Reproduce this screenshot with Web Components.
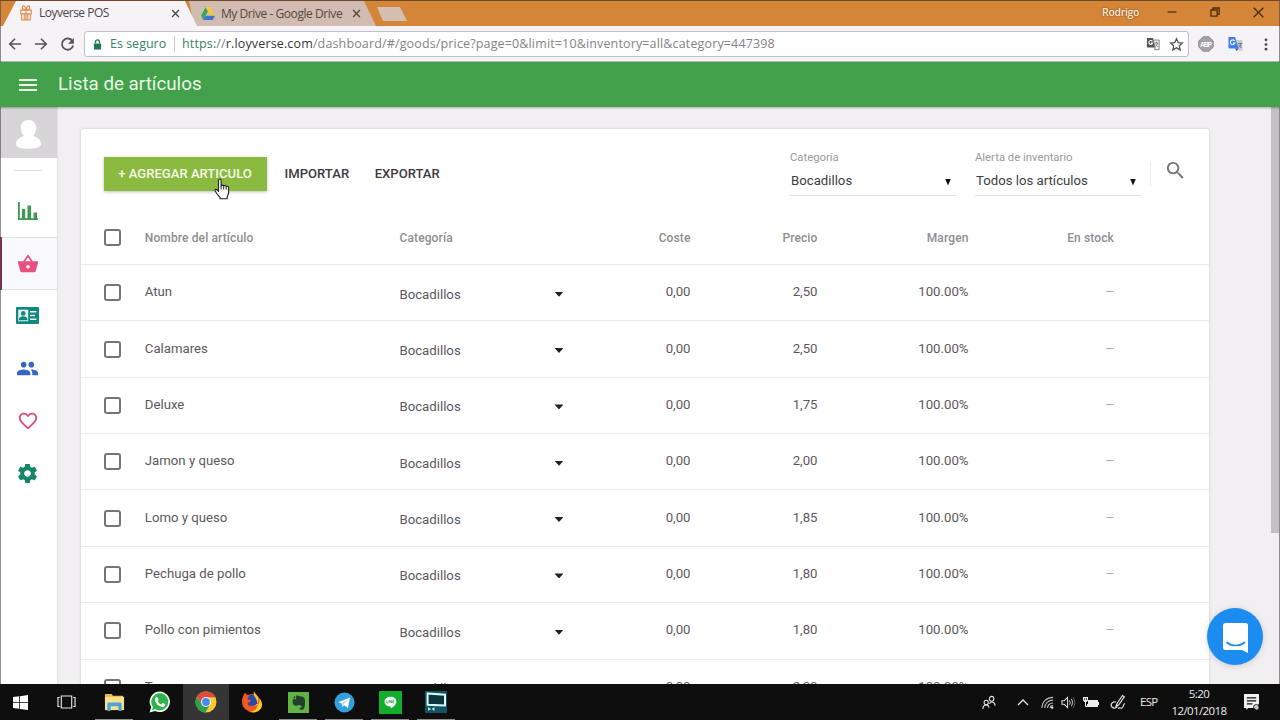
<!DOCTYPE html>
<html lang="es">
<head>
<meta charset="utf-8">
<title>Loyverse POS</title>
<style>
    html, body { margin: 0; height: 100%; overflow: hidden; }
    body { font-family: Roboto, "Liberation Sans", sans-serif; }
</style>
</head>
<body>
<pos-desktop></pos-desktop>

<script>
const ICONS = {
    gift: ["0 0 16 16", `<g fill="none" stroke="#df8a45" stroke-width="1.2"><path d="M2 5.2h12v3.6H2zM3 9v6h10V9M8 5v10M6 9v6M10 9v6M8 5C5 5 3 3.600 4 1.600S7.500 1.500 8 5c.5-3.500 3-5.400 4-3.400S11 5 8 5"/></g>`],
    drive: ["0 0 16 14", `<path fill="#3aa757" d="M5.300 0 0 9.300 2.700 14 8 4.700z"/><path fill="#f7c83c" d="M5.300 0h5.400L16 9.300h-5.400z"/><path fill="#3b73d8" d="M2.700 14 5.400 9.300H16L13.300 14z"/>`],
    close: ["0 0 10 10", `<path d="m1.200 1.200 7.600 7.600m0-7.600-7.600 7.600" stroke="currentColor" stroke-width="1.500"/>`],
    back: ["0 0 16 16", `<path d="M15 8H2m6-6L2 8l6 6" fill="none" stroke="currentColor" stroke-width="1.900"/>`],
    forward: ["0 0 16 16", `<path d="M1 8h13M8 2l6 6-6 6" fill="none" stroke="currentColor" stroke-width="1.900"/>`],
    reload: ["0 0 16 16", `<path d="M13.200 4.300A6 6 0 1 0 14 9" fill="none" stroke="currentColor" stroke-width="1.900"/><path d="M14.800 1v6.300H8.500z" fill="currentColor"/>`],
    lock: ["0 0 10 12", `<path fill="#1b7a4f" d="M1 5h8v6.500H1z"/><path d="M2.800 5V3.200a2.200 2.200 0 0 1 4.400 0V5" fill="none" stroke="#1b7a4f" stroke-width="1.400"/>`],
    translate: ["0 0 16 16", `<path fill="#555" d="M1 1h7l2.500 11H2a1 1 0 0 1-1-1z"/><path fill="#f2f2f2" stroke="#777" d="M8.500 3.500H15v11H9.500l1-2z"/><path d="M7.300 5a2.200 2.200 0 1 0 .2 2H5.700" fill="none" stroke="#fff" stroke-width="1.200"/><path d="M10 7h4m-2-1.500V7m1.300 0c-.5 2-1.500 3-2.300 3.700m0-2 2.500 2.500" fill="none" stroke="#777"/>`],
    star: ["0 0 16 16", `<path d="m8 1.800 1.900 4.100 4.400.5-3.300 3 .9 4.400L8 11.600l-3.900 2.200.9-4.400-3.300-3 4.400-.5z" fill="none" stroke="#555" stroke-width="1.400"/>`],
    abp: ["0 0 16 16", `<path fill="#a5a3a5" stroke="#8d8b8d" d="M5 .8h6L15.200 5v6L11 15.200H5L.8 11V5z"/><text x="8" y="10.800" font-family="Liberation Sans" font-size="6.800" font-weight="700" fill="#fff" text-anchor="middle" textLength="12">ABP</text>`],
    gtranslate: ["0 0 16 16", `<path fill="#c9ccd1" d="M8 4h6.500a1 1 0 0 1 1 1v9.500H9z"/><path fill="#3d7df0" d="M1.500 1H8l3.500 11.500H2.500a1 1 0 0 1-1-1z"/><path fill="#2458c4" d="M8 12.500h3.500L9.500 15z"/><path d="M7.600 5a2.300 2.300 0 1 0 .2 2H6" fill="none" stroke="#fff" stroke-width="1.200"/><path d="M11 7.500h4m-.8 0c-.5 2-1.500 3-2.700 4m.2-2.500 2.800 3" fill="none" stroke="#6b7078"/>`],
    dots: ["0 0 4 14", `<g fill="#444"><circle cx="2" cy="2" r="1.400"/><circle cx="2" cy="7" r="1.400"/><circle cx="2" cy="12" r="1.400"/></g>`],
    minimize: ["0 0 10 10", `<path d="M.5 5h9" stroke="#4a2b0c" stroke-width="1.200"/>`],
    restore: ["0 0 10 10", `<path d="M1 3h6.200v6.200H1zM3 3V1h6.200v6.200h-2" fill="none" stroke="#4a2b0c" stroke-width="1.300"/>`],
    quit: ["0 0 10 10", `<path d="m.6.600 8.800 8.800m0-8.800L.6 9.400" stroke="#4a2b0c" stroke-width="1.200"/>`],
    menu: ["0 0 18 12", `<path d="M0 1h18M0 6h18M0 11h18" stroke="#e9f8e6" stroke-width="2"/>`],
    person: ["0 0 26 32", `<path fill="#fff" d="M13 1c5 0 8 3.400 8 8 0 3.600-1.300 6.800-3.400 8.600 4.600 1.300 8.400 4 8.400 8.400 0 3-6 4.800-13 4.800S0 29 0 26c0-4.400 3.800-7.100 8.400-8.400C6.300 15.800 5 12.600 5 9c0-4.600 3-8 8-8z"/>`],
    chart: ["0 0 20 18", `<path fill="#3c9a50" d="M0 0h1.800v16.200H20V18H0zM4 7h3.200v10H4zM9.500 3.500h3.600V17H9.500zM15.600 10.500H19V17h-3.400z"/>`],
    basket: ["0 0 24 24", `<path fill="#e8517f" d="m17.210 9-4.380-6.560c-.190-.280-.510-.420-.830-.420s-.640.140-.830.430L6.790 9H2c-.550 0-1 .450-1 1 0 .090.010.180.040.270l2.540 9.270c.230.840 1 1.460 1.920 1.460h13c.920 0 1.690-.620 1.930-1.460l2.540-9.270L23 10c0-.550-.450-1-1-1zM9 9l3-4.400L15 9zm3 8c-1.100 0-2-.900-2-2s.900-2 2-2 2 .900 2 2-.900 2-2 2z"/>`],
    idcard: ["0 0 23 17", `<rect width="23" height="17" rx="1" fill="#12877d"/><rect x="2.200" y="2.700" width="10" height="11.600" fill="#e6f7f3"/><circle cx="7.200" cy="6.400" r="2.300" fill="#12877d"/><path fill="#12877d" d="M2.800 13.300c0-3 2-4 4.400-4s4.400 1 4.400 4z"/><path d="M14 4.700h6.500M14 8.500h5M14 12.300h6.500" stroke="#e6f7f3" stroke-width="1.500"/>`],
    people: ["0 0 24 24", `<path fill="#3566c2" d="M16 11c1.660 0 2.990-1.340 2.990-3S17.660 5 16 5s-3 1.340-3 3 1.340 3 3 3zm-8 0c1.660 0 2.990-1.340 2.990-3S9.660 5 8 5 5 6.340 5 8s1.340 3 3 3zm0 2c-2.330 0-7 1.170-7 3.500V19h14v-2.500c0-2.330-4.670-3.500-7-3.500zm8 0c-.290 0-.620.020-.970.050 1.160.840 1.970 1.970 1.970 3.450V19h6v-2.500c0-2.330-4.670-3.500-7-3.500z"/>`],
    heart: ["0 0 24 24", `<path fill="#dc4f7f" d="M16.500 3c-1.740 0-3.410.810-4.500 2.090C10.910 3.810 9.240 3 7.500 3 4.420 3 2 5.420 2 8.500c0 3.780 3.400 6.860 8.550 11.540L12 21.350l1.450-1.320C18.600 15.360 22 12.280 22 8.500 22 5.420 19.580 3 16.500 3zm-4.400 15.550-.1.100-.1-.1C7.140 14.240 4 11.390 4 8.500 4 6.500 5.500 5 7.500 5c1.540 0 3.040.990 3.570 2.360h1.870C13.460 5.990 14.960 5 16.500 5c2 0 3.500 1.500 3.500 3.500 0 2.890-3.140 5.740-7.900 10.050z"/>`],
    gear: ["0 0 24 24", `<path fill="#16856b" d="M19.430 12.980c.040-.320.070-.640.070-.980s-.030-.660-.070-.980l2.110-1.650c.190-.150.240-.420.120-.640l-2-3.460c-.120-.220-.390-.300-.610-.220l-2.490 1c-.520-.400-1.080-.730-1.690-.980l-.380-2.650C14.460 2.180 14.250 2 14 2h-4c-.250 0-.460.180-.490.420l-.380 2.650c-.610.250-1.170.590-1.690.980l-2.490-1c-.230-.090-.490 0-.610.220l-2 3.460c-.130.220-.070.490.120.640l2.110 1.650c-.040.320-.070.650-.070.980s.030.660.070.980l-2.110 1.650c-.190.150-.240.420-.120.640l2 3.460c.120.220.390.300.610.220l2.490-1c.520.400 1.080.730 1.690.980l.380 2.650c.030.240.240.420.490.420h4c.250 0 .460-.180.490-.420l.380-2.650c.610-.250 1.170-.590 1.690-.980l2.490 1c.230.090.490 0 .610-.220l2-3.460c.120-.220.070-.490-.120-.640zM12 15.500c-1.930 0-3.500-1.570-3.500-3.500s1.570-3.500 3.500-3.500 3.500 1.570 3.500 3.500-1.570 3.500-3.500 3.500z"/>`],
    search: ["0 0 24 24", `<path fill="#757575" d="M15.500 14h-.790l-.280-.270C15.410 12.590 16 11.110 16 9.500 16 5.910 13.090 3 9.500 3S3 5.910 3 9.500 5.910 16 9.500 16c1.610 0 3.090-.590 4.230-1.570l.270.280v.790l5 4.990L20.490 19zm-6 0C7.010 14 5 11.990 5 9.500S7.010 5 9.500 5 14 7.010 14 9.500 11.990 14 9.500 14z"/>`],
    chat: ["0 0 28 32", `<path fill="#fff" d="M3.500 1h20A2.500 2.500 0 0 1 26 3.500V31l-6-3H3.500A2.500 2.500 0 0 1 1 25.500v-22A2.500 2.500 0 0 1 3.500 1z"/><path d="M5 20.500c5 4 12.500 4 17.500 0" fill="none" stroke="#1d8cf0" stroke-width="1.700" stroke-linecap="round"/>`],
    hand: ["0 0 18 22", `<path fill="#fff" stroke="#222" stroke-width="1.100" stroke-linejoin="round" d="M5.500 13.500V2.500c0-2 2.600-2 2.600 0V8c.3-1.300 2.500-1.200 2.600.300.400-1.200 2.400-1 2.500.500.500-1 2.400-.700 2.400 1v4.700c0 2-1.400 3-1.400 5v1.300H7v-1.300c-1.300-2-3.300-3.500-4.800-6.500-.9-1.900 1.500-2.500 3.300.500z"/><path d="M8.100 8v3.500M10.700 8.500v3M13.200 9v2.500" stroke="#222"/>`],
    windows: ["0 0 16 16", `<path fill="#fff" d="M0 2.200 6.500 1.300v6.300H0zM7.300 1.200 16 0v7.600H7.300zM0 8.400h6.500v6.300L0 13.800zM7.300 8.400H16V16l-8.700-1.200z"/>`],
    taskview: ["0 0 20 14", `<path d="M4.500 1h11v12h-11zM3 2.500H1v9h2M17 2.500h2v9h-2" fill="none" stroke="#e8e8e8" stroke-width="1.200"/>`],
    explorer: ["0 0 22 20", `<path fill="#e9b84c" d="M1 1h7l1.500 2H20v4H1z"/><path fill="#fbe08b" d="M1 4h20v14H1z"/><path fill="#4ba3dc" d="M3.500 11.500A1.500 1.500 0 0 1 5 10h12a1.500 1.500 0 0 1 1.500 1.500V19H15v-5H7v5H3.500z"/>`],
    whatsapp: ["0 0 22 22", `<path fill="#f2fff5" d="M11 .500A10.300 10.300 0 0 0 2.200 16.200L.600 21.500l5.400-1.500A10.300 10.300 0 1 0 11 .500z"/><path fill="#2cb349" d="M11 2.200A8.600 8.600 0 0 0 4 15.900l-1 3.200 3.300-.9A8.600 8.600 0 1 0 11 2.200z"/><path fill="#fff" d="M7.600 6c-.6 0-1.700 1-1.600 2.700.2 3.500 4.200 7.200 7.500 7.300 1.500 0 2.700-1 2.700-2.400 0-.5-2.400-1.700-2.800-1.500l-1.100 1.400c-1.600-.5-3-2-3.700-3.500l1-1.200C9.700 8.400 8.700 6 8.200 6z"/>`],
    chrome: ["0 0 22 22", `<circle cx="11" cy="11" r="10.500" fill="#fbc934"/><path fill="#dd4b3e" d="M11 11 1.900 5.700a10.500 10.500 0 0 1 18.200 0L11 6.300z"/><path fill="#dd4b3e" d="M2 5.600 7 14l4-7.700h9.500A10.500 10.500 0 0 0 2 5.600z"/><path fill="#2da04f" d="M1.900 5.700A10.500 10.500 0 0 0 10.400 21.500l4.700-8.200-8.100.4z"/><circle cx="11" cy="11" r="5" fill="#f4f4f4"/><circle cx="11" cy="11" r="3.900" fill="#4a8af4"/>`],
    firefox: ["0 0 22 22", `<circle cx="11" cy="12" r="9" fill="#f4581f"/><circle cx="11" cy="9.500" r="6" fill="#2b4aa8"/><path fill="#f4581f" d="M1 11C1 6 3 4 4 1.500 5 3.500 6 4 8 4.500L6.500 8l3 1.500c0 2-3 1.500-2.700 3.500.3 2 3.700 3 6.700 1l1 5-9 0C2.500 17 1 14 1 11z"/><path fill="#ffc62f" d="M13 0c.500 2.500 3.500 4 4.200 7 1 4-1 7-4.200 8 5 0 6-4 5.500-7.500C21 10 22 14 20 17.500c-2.500 4-8 5-12.500 3 7 .500 9.500-4 9-8C16 7 11.500 5 13 0z"/>`],
    evernote: ["0 0 22 22", `<rect width="22" height="22" fill="#61b346"/><path fill="#233f2c" d="M8.500 4v2.500a1 1 0 0 1-1 1H5c-.5 3 0 6 2 6.700 2 .500 3.700.300 4-1.200.700 1.500 3.500.800 3.300 2.500 0 1.300-1.300 1-2 1-.500 1 0 2.200 1.500 2.200 3 0 4-2 4-8 0-2-.1-4.200-1-5C15 4.500 13 5 12 4.300 11 3.500 9.500 3.500 8.500 4zM5 6.600h2.500V4z"/>`],
    telegram: ["0 0 22 22", `<circle cx="11" cy="11" r="10.500" fill="#33a1dc"/><path fill="#fff" d="m4.500 10.800 12.300-5-2.200 11-4-3-2 2-.6-3.700z"/><path fill="#b9dcef" d="m8 12.100 7-4.700-4.800 5.600-1.600 2.800z"/>`],
    line: ["0 0 22 22", `<rect width="22" height="22" fill="#12ad2b"/><path fill="#fff" d="M11 5.500c3.500 0 5.600 2 5.600 4.700 0 3-3 4.800-5.300 6.500l-.2-1.900c-3.500-.2-5.800-2-5.800-4.600C5.300 7.500 7.600 5.500 11 5.500z"/><path d="M7.500 8.900v2.500h1.100m.9-2.500v2.500m.9 0V8.900l1.700 2.500V8.900m2.200 0h-1.100v2.500h1.100m-1.100-1.200h1" fill="none" stroke="#12ad2b" stroke-width=".7"/>`],
    screen: ["0 0 22 22", `<rect width="22" height="22" fill="#15535f"/><path d="m2.600 2.500 17.400 1.300v10.700L2.600 13.700z" fill="#0d333c" stroke="#d8fbff" stroke-width="2"/><path d="M3 16v4l3-2zM9.500 16v4l-3-2z" fill="#9ee4e8"/>`],
    contacts: ["0 0 16 16", `<g fill="none" stroke="#e4e4e4" stroke-width="1.200"><circle cx="11" cy="4" r="2.600"/><circle cx="4.800" cy="8" r="2.400"/><path d="M1 15c0-5 6-6 7-1.500M8.500 9.500C9.500 6.500 14.500 6.500 15 11.500"/></g>`],
    chevron: ["0 0 12 8", `<path d="m1 7 5-5 5 5" fill="none" stroke="#e4e4e4" stroke-width="1.300"/>`],
    wifi: ["0 0 14 14", `<g fill="none" stroke="#bbb" stroke-width="1.200"><path d="M1 13C1 6 6 1.500 13 1.500M4 13c0-5 4-8.500 9-8.500M7 13c0-3 2.500-5.500 6-5.500M10 13c0-1.500 1-2.700 3-2.700"/></g><circle cx="12" cy="12.500" r="1.300" fill="#eee"/>`],
    volume: ["0 0 16 14", `<path d="M1 5h2.500L7 1.500v11L3.500 9H1z" fill="none" stroke="#ddd" stroke-width="1.100"/><path d="M9 4.500q1.500 2.500 0 5M11 3q2.500 4 0 8" fill="none" stroke="#bbb" stroke-width="1.100"/><path d="M13 1.500q3.500 5.500 0 11" fill="none" stroke="#666"/>`],
    battery: ["0 0 16 12", `<path fill="#eee" d="M5 4h10v7H4V8h1z"/><path fill="#eee" d="M15 6h1v3h-1zM0 1h5v3.500L3.500 6h-2L0 4.500z"/><path d="M2.500 5v5.500H5" fill="none" stroke="#eee"/><path d="M1.700 2v2m1.700-2v2" stroke="#111" stroke-width=".7"/>`],
    pen: ["0 0 16 16", `<g fill="none" stroke="#e4e4e4" stroke-width="1.200"><path d="m7 9.500 5.500-8 1.800 1.300-5.500 8L6 12.500z"/><path d="M6 8c-4-1-6 3-4 5s5 1 5-1m1 2.500c2-2 3 1 4.500-1s.5-3.500 2.500-4"/></g>`],
    notes: ["0 0 16 16", `<path fill="#f1f1f1" d="M0 0h16v9.500l-3 4.500H4.500L2.500 16v-2H0z"/><path d="M3 3.800h10M3 6.800h10M3 9.800h6" stroke="#111" stroke-width="1.200"/><path d="M10 13.500q0-3 3-3t3 3-3 2.500z" fill="#ccc" stroke="#111" stroke-width=".8"/>`],
};

// <svg-icon name="gear" w="20" h="20">
class SvgIcon extends HTMLElement {
    constructor() {
        super().attachShadow({ mode: "open" });
    }

    connectedCallback() {
        const [viewBox, shapes] = ICONS[this.getAttribute("name")];
        const w = this.getAttribute("w") || 16;
        const h = this.getAttribute("h") || w;
        this.shadowRoot.innerHTML = `
            <style>
                :host { display: inline-flex; flex: none; }
                svg { display: block; }
            </style>
            <svg width="${w}" height="${h}" viewBox="${viewBox}" preserveAspectRatio="none">${shapes}</svg>
        `;
    }
}

class BrowserTab extends HTMLElement {
    constructor() {
        super().attachShadow({ mode: "open" });

        this.shadowRoot.innerHTML = `
            <style>
                :host {
                    display: flex;
                    align-items: center;
                    box-sizing: border-box;
                    height: 25px;
                    padding: 0 15px 0 15px;
                    background: #d2bcb1;
                    color: #54483f;
                    font: 12px/16px "Open Sans", "Noto Sans", sans-serif;
                    clip-path: polygon(0 0, calc(100% - 12px) 0, 100% 100%, 5px 100%);
                }
                :host([active]) {
                    height: 26px;
                    background: #f5f3f6;
                    color: #4a484b;
                    clip-path: polygon(13px 1px, calc(100% - 12px) 1px, 100% 100%, 0 100%);
                }
                .title { flex: 1; margin-left: 6px; white-space: nowrap; letter-spacing: var(--title-spacing, 0); }
            </style>
            <slot name="icon"></slot>
            <span class="title"><slot></slot></span>
            <svg-icon name="close" w="9"></svg-icon>
        `;
    }
}

class BrowserTitlebar extends HTMLElement {
    constructor() {
        super().attachShadow({ mode: "open" });

        this.shadowRoot.innerHTML = `
            <style>
                :host {
                    display: flex;
                    align-items: flex-end;
                    height: 26px;
                    background: #d58538;
                    box-shadow: inset 0 1px #6e4a2c;
                    font: 600 10.5px/14px "Open Sans", "Noto Sans", sans-serif;
                }
                browser-tab:nth-of-type(1) { width: 194px; margin-left: 3px; padding: 0 17px 0 16px; --title-spacing: -.5px; z-index: 1; }
                browser-tab:nth-of-type(2) { width: 187px; margin-left: -8px; align-self: flex-start; margin-top: 1px; padding-left: 12px; --title-spacing: -.44px; }
                .new-tab {
                    width: 30px;
                    height: 14px;
                    margin: 0 0 5px 1px;
                    background: #d5bfb2;
                    clip-path: polygon(0 0, 23px 0, 100% 100%, 6px 100%);
                }
                .controls { display: flex; align-items: center; align-self: center; margin: -2px 0 0 auto; }
                .user { color: #fbe9d6; text-shadow: 0 0 2px #6b3d12; margin-right: 28px; letter-spacing: -.35px; }
                .controls svg-icon { margin-right: 33px; }
                .controls svg-icon:last-child { margin-right: 16px; }
            </style>
            <browser-tab active><svg-icon slot="icon" name="gift" w="14" h="16"></svg-icon>Loyverse POS</browser-tab>
            <browser-tab><svg-icon slot="icon" name="drive" w="14" h="13"></svg-icon>My Drive - Google Drive</browser-tab>
            <div class="new-tab"></div>
            <div class="controls">
                <span class="user">Rodrigo</span>
                <svg-icon name="minimize" w="10"></svg-icon>
                <svg-icon name="restore" w="10"></svg-icon>
                <svg-icon name="quit" w="11"></svg-icon>
            </div>
        `;
    }
}

class BrowserToolbar extends HTMLElement {
    constructor() {
        super().attachShadow({ mode: "open" });

        this.shadowRoot.innerHTML = `
            <style>
                :host {
                    display: flex;
                    align-items: center;
                    box-sizing: border-box;
                    height: 36px;
                    padding: 1px 12px 0 8px;
                    background: #f5f3f6;
                    border-bottom: 1px solid #bdb9bf;
                    color: #555357;
                    font: 12.5px/18px "Open Sans", "Noto Sans", sans-serif;
                }
                .nav { display: flex; gap: 12px; width: 76px; }
                .address {
                    display: flex;
                    align-items: center;
                    flex: 1;
                    box-sizing: border-box;
                    height: 26px;
                    padding: 0 4px 0 8px;
                    background: #fff;
                    border: 1px solid #c3c0c5;
                    border-radius: 3px;
                    white-space: nowrap;
                }
                .secure { color: #3b8264; margin-left: 8px; width: 64px; }
                .divider { width: 1px; height: 16px; background: #c9c9c9; margin: 0 7px 0 0; }
                .url { flex: 1; color: #858387; letter-spacing: .145px; }
                .scheme { color: #3b8264; }
                .host { color: #38363a; }
                .address svg-icon + svg-icon { margin-left: 9px; }
                .extensions { display: flex; align-items: center; margin-left: 9px; }
            </style>
            <div class="nav">
                <svg-icon name="back" w="14"></svg-icon>
                <svg-icon name="forward" w="14"></svg-icon>
                <svg-icon name="reload" w="15"></svg-icon>
            </div>
            <div class="address">
                <svg-icon name="lock" w="9" h="11"></svg-icon>
                <span class="secure">Es seguro</span>
                <span class="divider"></span>
                <span class="url"><span class="scheme">https:</span>//<span class="host">r.loyverse.com</span>/dashboard/#/goods/price?page=0&amp;limit=10&amp;inventory=all&amp;category=447398</span>
                <svg-icon name="translate" w="14"></svg-icon>
                <svg-icon name="star" w="15"></svg-icon>
            </div>
            <div class="extensions">
                <svg-icon name="abp" w="16"></svg-icon>
                <svg-icon name="gtranslate" w="16" style="margin: 0 21px 0 13px"></svg-icon>
                <svg-icon name="dots" w="4" h="13"></svg-icon>
            </div>
        `;
    }
}

class AppHeader extends HTMLElement {
    constructor() {
        super().attachShadow({ mode: "open" });

        this.shadowRoot.innerHTML = `
            <style>
                :host {
                    display: flex;
                    align-items: center;
                    gap: 21px;
                    box-sizing: border-box;
                    height: 45px;
                    padding-left: 19px;
                    background: #43a04b;
                    color: #e9f8e6;
                    font-size: 18.8px;
                    box-shadow: 0 1px 2px rgba(0, 0, 0, .3);
                    z-index: 1;
                }
                h1 { margin: 0 0 2px; font: inherit; }
            </style>
            <svg-icon name="menu" w="18" h="12"></svg-icon>
            <h1><slot></slot></h1>
        `;
    }
}

class SideNav extends HTMLElement {
    constructor() {
        super().attachShadow({ mode: "open" });

        this.shadowRoot.innerHTML = `
            <style>
                :host {
                    display: block;
                    box-sizing: border-box;
                    width: 57px;
                    background: #fff;
                    box-shadow: 1px 0 1px rgba(0, 0, 0, .06);
                }
                .avatar { display: flex; justify-content: center; align-items: center; box-sizing: border-box; height: 51px; background: #d7d5d7; padding: 4px 1px 0 0; }
                hr { width: 28px; height: 1px; margin: 12px 0 14px 14px; border: 0; background: #dedede; }
                nav { display: grid; grid-auto-rows: 52.4px; }
                a { display: flex; justify-content: center; align-items: center; padding-right: 2px; }
                a.active {
                    padding-right: 4px;
                    background: #f9f8fb;
                    border-left: 2px solid #8c2a50;
                    box-shadow: inset 0 1px #e2e0e3, inset 0 -1px #e2e0e3;
                }
            </style>
            <div class="avatar"><svg-icon name="person" w="25" h="31"></svg-icon></div>
            <hr>
            <nav>
                <a><svg-icon name="chart" w="20" h="18"></svg-icon></a>
                <a class="active"><svg-icon name="basket" w="22" h="22"></svg-icon></a>
                <a><svg-icon name="idcard" w="23" h="17"></svg-icon></a>
                <a><svg-icon name="people" w="23" h="23"></svg-icon></a>
                <a><svg-icon name="heart" w="22" h="22"></svg-icon></a>
                <a><svg-icon name="gear" w="23" h="23"></svg-icon></a>
            </nav>
        `;
    }
}

class SelectField extends HTMLElement {
    constructor() {
        super().attachShadow({ mode: "open" });
    }

    connectedCallback() {
        this.shadowRoot.innerHTML = `
            <style>
                :host { display: block; width: 166px; border-bottom: 1px solid #e2e0e3; }
                label { display: block; color: #9b999c; font-size: 11.3px; line-height: 14px; }
                .value {
                    display: flex;
                    justify-content: space-between;
                    align-items: center;
                    height: 30px;
                    padding: 0 5px 0 1px;
                    color: #414043;
                    font-size: 13.2px;
                }
                .caret { width: 6px; height: 7px; margin-top: 4px; background: #111; clip-path: polygon(0 0, 100% 0, 50% 100%); }
            </style>
            <label>${this.getAttribute("label")}</label>
            <div class="value"><slot></slot><span class="caret"></span></div>
        `;
    }
}

class CheckBox extends HTMLElement {
    constructor() {
        super().attachShadow({ mode: "open" });

        this.shadowRoot.innerHTML = `
            <style>
                :host {
                    display: block;
                    box-sizing: border-box;
                    width: 17px;
                    height: 17px;
                    border: 2px solid #767477;
                    border-radius: 3px;
                }
            </style>
        `;
    }
}

class ItemRow extends HTMLElement {
    constructor() {
        super().attachShadow({ mode: "open" });
    }

    connectedCallback() {
        const cell = (name) => this.getAttribute(name);
        const header = this.hasAttribute("header");
        this.shadowRoot.innerHTML = `
            <style>
                :host {
                    display: grid;
                    grid-template-columns: 41.300px 254.700px 164px 127px 127px 151px 145.500px;
                    align-items: center;
                    box-sizing: border-box;
                    height: 56.36px;
                    padding: 0 0 0 23px;
                    border-bottom: 1px solid #eceaed;
                    color: #5b595c;
                    font-size: 13.2px;
                }
                :host([header]) { height: 54px; color: #8f8d90; font-size: 12px; font-weight: 500; letter-spacing: .12px; }
                span { padding-bottom: 2px; }
                :host([header]) span { padding-bottom: 0; }
                .num { text-align: right; }
                .category { display: flex; justify-content: space-between; align-items: center; padding: 3px 0 0; }
                :host([header]) .category { padding: 0; }
                .caret { width: 9px; height: 5px; background: #222; clip-path: polygon(0 0, 100% 0, 50% 100%); }
                .stock { color: #a5a3a6; font-size: 11px; }
                :host([header]) .stock { color: inherit; font-size: inherit; }
            </style>
            <check-box></check-box>
            <span>${cell("name")}</span>
            <span class="category">${cell("category") || "Bocadillos"}${header ? "" : '<i class="caret"></i>'}</span>
            <span class="num">${cell("cost") || "0,00"}</span>
            <span class="num">${cell("price")}</span>
            <span class="num">${cell("margin") || "100.00%"}</span>
            <span class="num stock">${cell("stock") || "—"}</span>
        `;
    }
}

class ItemsCard extends HTMLElement {
    constructor() {
        super().attachShadow({ mode: "open" });

        this.shadowRoot.innerHTML = `
            <style>
                :host { display: block; background: #fff; border-radius: 2px 2px 0 0; box-shadow: 0 0 3px rgba(0, 0, 0, .16); }
                .actions { display: flex; align-items: flex-start; box-sizing: border-box; height: 82px; padding: 22px 21.500px 0 23px; }
                button {
                    height: 44px;
                    padding: 0;
                    border: 0;
                    background: none;
                    color: #3d3b3e;
                    font: 500 13.1px Roboto, sans-serif;
                }
                .add {
                    width: 163px;
                    height: 34px;
                    margin: 6px 18px 0 0;
                    padding-bottom: 2px;
                    background: #8aba40;
                    color: #f6fbe9;
                    box-shadow: 0 1px 3px rgba(0, 0, 0, .25);
                }
                .export { margin-left: 25.500px; }
                .filters { display: flex; gap: 19px; margin-left: auto; }
                .search { display: flex; align-items: center; height: 24px; margin: 11px 0 0 9px; padding-left: 13px; border-left: 1px solid #eceaed; }
                .search svg-icon { margin-top: -7px; }
            </style>
            <div class="actions">
                <button class="add">+ AGREGAR ARTICULO</button>
                <button>IMPORTAR</button>
                <button class="export">EXPORTAR</button>
                <div class="filters">
                    <select-field label="Categoría">Bocadillos</select-field>
                    <select-field label="Alerta de inventario">Todos los artículos</select-field>
                </div>
                <div class="search"><svg-icon name="search" w="23"></svg-icon></div>
            </div>
            <slot></slot>
        `;
    }
}

class TaskBar extends HTMLElement {
    constructor() {
        super().attachShadow({ mode: "open" });

        this.shadowRoot.innerHTML = `
            <style>
                :host {
                    display: flex;
                    height: 36px;
                    background: #0e0e0e;
                    color: #ececec;
                    font: 11.5px/16px "Open Sans", "Noto Sans", sans-serif;
                }
                .app { display: flex; justify-content: center; align-items: center; width: 46px; }
                .app.start { width: 41px; }
                .app.view { width: 50px; }
                .app.focused { background: #353535; }
                .app.open { background: linear-gradient(#8d8d8d, #8d8d8d) center bottom / 38px 1px no-repeat; }
                .tray { display: flex; align-items: center; margin-left: auto; }
                .clock { width: 60px; margin: 0 15px 0 12px; text-align: center; line-height: 17px; letter-spacing: -.6px; }
                .lang { width: 17px; letter-spacing: -.7px; }
            </style>
            <div class="app start"><svg-icon name="windows" w="15"></svg-icon></div>
            <div class="app view"><svg-icon name="taskview" w="19" h="14"></svg-icon></div>
            <div class="app open"><svg-icon name="explorer" w="21" h="19"></svg-icon></div>
            <div class="app"><svg-icon name="whatsapp" w="22"></svg-icon></div>
            <div class="app focused"><svg-icon name="chrome" w="22"></svg-icon></div>
            <div class="app"><svg-icon name="firefox" w="22"></svg-icon></div>
            <div class="app open"><svg-icon name="evernote" w="21"></svg-icon></div>
            <div class="app open"><svg-icon name="telegram" w="21"></svg-icon></div>
            <div class="app open"><svg-icon name="line" w="23"></svg-icon></div>
            <div class="app open"><svg-icon name="screen" w="22"></svg-icon></div>
            <div class="tray">
                <svg-icon name="contacts" w="14" h="15" style="margin-right: 21px"></svg-icon>
                <svg-icon name="chevron" w="12" h="8" style="margin-right: 12px"></svg-icon>
                <svg-icon name="wifi" w="13" style="margin-right: 7px"></svg-icon>
                <svg-icon name="volume" w="15" h="13" style="margin-right: 7px"></svg-icon>
                <svg-icon name="battery" w="16" h="12" style="margin-right: 11px"></svg-icon>
                <svg-icon name="pen" w="16" style="margin-right: 14px"></svg-icon>
                <span class="lang">ESP</span>
                <div class="clock">5:20<br>12/01/2018</div>
                <svg-icon name="notes" w="15" h="16" style="margin-right: 21px"></svg-icon>
            </div>
        `;
    }
}

class PosDesktop extends HTMLElement {
    constructor() {
        super().attachShadow({ mode: "open" });

        this.shadowRoot.innerHTML = `
            <style>
                :host {
                    display: grid;
                    grid-template-rows: 26px 36px 45px minmax(0, 1fr) 36px;
                    position: relative;
                    width: 1280px;
                    height: 720px;
                    overflow: hidden;
                }
                .page { display: flex; background: #f1eff2; overflow: hidden; }
                items-card { width: 1128px; height: 700px; margin: 22px 0 0 23.500px; }
                .scrollbar { width: 8px; height: 426px; margin: 0 1px 0 auto; background: #c2c0c3; }
                .chat {
                    position: absolute;
                    left: 1207px;
                    top: 608px;
                    display: flex;
                    justify-content: center;
                    align-items: center;
                    box-sizing: border-box;
                    width: 56px;
                    height: 57px;
                    padding: 2px 0 0 1px;
                    border-radius: 50%;
                    background: #1d8cf0;
                    box-shadow: 0 1px 6px rgba(0, 0, 0, .15);
                }
                .pointer { position: absolute; left: 213px; top: 178px; }
                /* dark frame of the screen recording */
                .edges { position: absolute; inset: 0 0 36px; border: solid #4b464b; border-width: 0 1px; opacity: .6; }
            </style>
            <browser-titlebar></browser-titlebar>
            <browser-toolbar></browser-toolbar>
            <app-header>Lista de artículos</app-header>
            <div class="page">
                <side-nav></side-nav>
                <items-card>
                    <item-row header name="Nombre del artículo" category="Categoría" cost="Coste" price="Precio" margin="Margen" stock="En stock"></item-row>
                    <item-row name="Atun" price="2,50"></item-row>
                    <item-row name="Calamares" price="2,50"></item-row>
                    <item-row name="Deluxe" price="1,75"></item-row>
                    <item-row name="Jamon y queso" price="2,00"></item-row>
                    <item-row name="Lomo y queso" price="1,85"></item-row>
                    <item-row name="Pechuga de pollo" price="1,80"></item-row>
                    <item-row name="Pollo con pimientos" price="1,80"></item-row>
                    <item-row name="Torrezno" price="2,00"></item-row>
                </items-card>
                <div class="scrollbar"></div>
            </div>
            <task-bar></task-bar>
            <div class="edges"></div>
            <div class="chat"><svg-icon name="chat" w="28" h="32"></svg-icon></div>
            <svg-icon class="pointer" name="hand" w="18" h="22"></svg-icon>
        `;
    }
}

customElements.define("svg-icon", SvgIcon);
customElements.define("browser-tab", BrowserTab);
customElements.define("browser-titlebar", BrowserTitlebar);
customElements.define("browser-toolbar", BrowserToolbar);
customElements.define("app-header", AppHeader);
customElements.define("side-nav", SideNav);
customElements.define("select-field", SelectField);
customElements.define("check-box", CheckBox);
customElements.define("item-row", ItemRow);
customElements.define("items-card", ItemsCard);
customElements.define("task-bar", TaskBar);
customElements.define("pos-desktop", PosDesktop);
</script>
</body>
</html>
